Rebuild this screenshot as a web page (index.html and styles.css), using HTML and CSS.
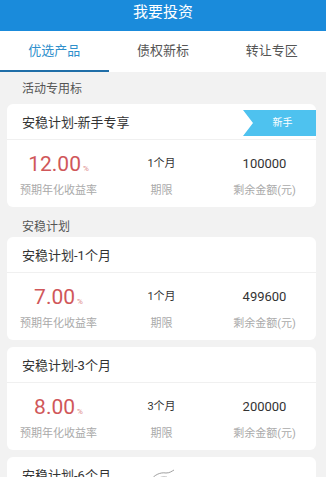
FILE: index.html
```html
<!DOCTYPE html>
<html lang="zh">
<head>
<meta charset="utf-8">
<link rel="stylesheet" href="styles.css">
</head>
<body>
<div class="page">
  <header class="topbar">我要投资</header>
  <nav class="tabs">
    <div class="tab active">优选产品</div>
    <div class="tab">债权新标</div>
    <div class="tab">转让专区</div>
  </nav>
  <main class="content">
    <div class="section-label first">活动专用标</div>
    <div class="card">
      <div class="card-head">
        <span class="card-title">安稳计划-新手专享</span>
        <span class="badge">新手</span>
      </div>
      <div class="stats">
        <div class="stat"><div class="rate">12.00<small>%</small></div><div class="lbl">预期年化收益率</div></div>
        <div class="stat"><div class="term">1个月</div><div class="lbl">期限</div></div>
        <div class="stat"><div class="amount">100000</div><div class="lbl">剩余金额(元)</div></div>
      </div>
    </div>
    <div class="section-label">安稳计划</div>
    <div class="card">
      <div class="card-head"><span class="card-title">安稳计划-1个月</span></div>
      <div class="stats">
        <div class="stat"><div class="rate">7.00<small>%</small></div><div class="lbl">预期年化收益率</div></div>
        <div class="stat"><div class="term">1个月</div><div class="lbl">期限</div></div>
        <div class="stat"><div class="amount">499600</div><div class="lbl">剩余金额(元)</div></div>
      </div>
    </div>
    <div class="card">
      <div class="card-head"><span class="card-title">安稳计划-3个月</span></div>
      <div class="stats">
        <div class="stat"><div class="rate">8.00<small>%</small></div><div class="lbl">预期年化收益率</div></div>
        <div class="stat"><div class="term">3个月</div><div class="lbl">期限</div></div>
        <div class="stat"><div class="amount">200000</div><div class="lbl">剩余金额(元)</div></div>
      </div>
    </div>
    <div class="card">
      <div class="card-head">
        <span class="card-title">安稳计划-6个月</span>
        <svg class="stamp" width="30" height="12" viewBox="0 0 30 12"><path d="M2 12 C6 6 12 3 18 4 C22 4 24 2 26 1" fill="none" stroke="#888" stroke-width="0.8"/><path d="M8 12 C11 8 15 7 19 8" fill="none" stroke="#aaa" stroke-width="0.7"/></svg>
      </div>
    </div>
  </main>
</div>
</body>
</html>
```
FILE: styles.css
```css
* { box-sizing: border-box; margin: 0; padding: 0; }
html, body { width: 326px; height: 477px; overflow: hidden; }
body {
  font-family: Roboto, "Noto Sans CJK SC", "Noto Sans", sans-serif;
  background: #f2f2f2;
  color: #333;
}
.topbar {
  height: 31px;
  background: #1a8bdb;
  color: #fff;
  font-size: 15px;
  text-align: center;
  line-height: 25px;
}
.tabs {
  display: flex;
  height: 41px;
  background: #fff;
}
.tab {
  flex: 1;
  text-align: center;
  font-size: 13px;
  color: #555;
  line-height: 39px;
  border-bottom: 2px solid transparent;
}
.tab.active {
  color: #2f90cc;
  border-bottom-color: #1f6ea8;
}
.content { padding: 0 10px 0 7px; }
.section-label {
  font-size: 12px;
  color: #555;
  padding-left: 15px;
  height: 23px;
  line-height: 27px;
}
.section-label.first {
  height: 32px;
  line-height: 34px;
}
.card {
  background: #fff;
  border-radius: 6px;
  margin-bottom: 7px;
  overflow: hidden;
}
.card-head {
  position: relative;
  height: 36px;
  display: flex;
  align-items: center;
  padding-left: 15px;
  border-bottom: 1px solid #f0f0f0;
}
.card-title { font-size: 13px; color: #333; }
.badge {
  position: absolute;
  right: 0;
  top: 6px;
  width: 73px;
  height: 26px;
  background: #4ec2ef;
  color: #fff;
  font-size: 10px;
  line-height: 26px;
  text-align: center;
  padding-left: 6px;
  clip-path: polygon(0 0, 100% 0, 100% 100%, 0 100%, 10px 50%);
}
.stamp { margin-left: 37px; }
.stats {
  display: flex;
  height: 67px;
  padding-top: 10px;
}
.stat { flex: 1; text-align: center; }
.rate {
  color: #d0575a;
  font-size: 21px;
  height: 28px;
  line-height: 28px;
}
.rate small { font-size: 8px; margin-left: 2px; color: #d88; }
.term { font-size: 11px; color: #333; height: 28px; line-height: 28px; }
.amount { font-size: 13px; color: #333; height: 28px; line-height: 28px; }
.lbl { font-size: 11px; color: #aaa; margin-top: 3px; }
```
